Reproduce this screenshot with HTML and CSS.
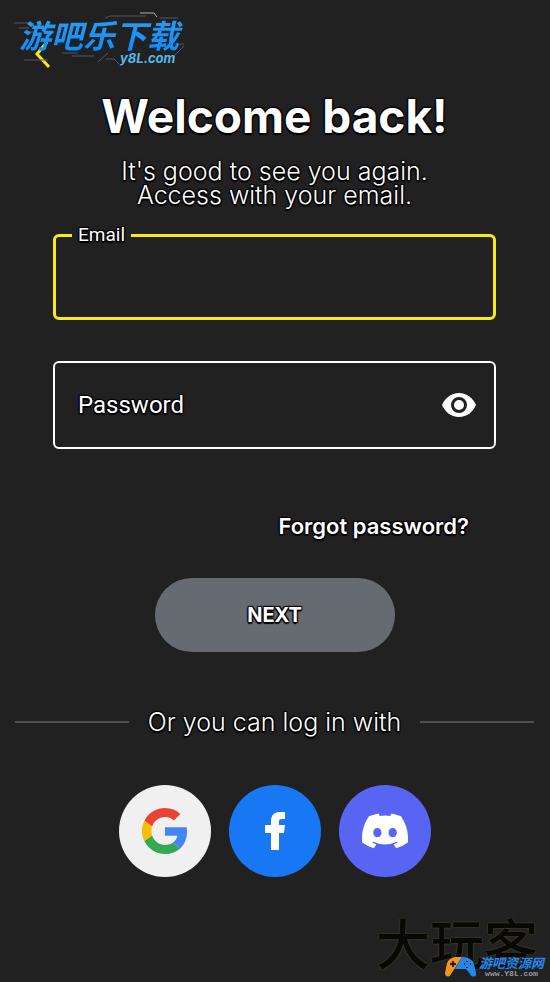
FILE: index.html
```html
<!DOCTYPE html>
<html lang="en">
<head>
    <meta charset="UTF-8">
    <meta name="viewport" content="width=device-width, initial-scale=1.0">
    <title>Welcome back!</title>
    <link rel="stylesheet" href="styles.css">
</head>
<body>
    <header class="header">
        <button class="back" type="button" aria-label="Back">
            <svg width="16" height="28" viewBox="0 0 16 28"><path d="M13 2 3 14 15 27" fill="none" stroke="#f5ea14" stroke-width="3"/></svg>
        </button>
        <div class="site-logo" lang="zh-CN">
            <svg class="site-lines" viewBox="0 0 180 60" fill="none" stroke="#55556a">
                <path d="M0 11h17M5 16h10M10 20h10M91 6l5-2h36M146 6h18" />
                <path d="M126 1h14l3 4" stroke="#b0b0b8"/>
                <path d="M10 48h24M48 41h16M58 44h22M84 50l10-9M92 47h8l5 5M158 46l12-12M160 32h10" />
            </svg>
            <span class="site-name">游吧乐下载</span>
            <span class="site-domain">y8L.com</span>
        </div>
    </header>

    <main class="container">
        <h1>Welcome back!</h1>
        <p class="intro">It's good to see you again.<br>Access with your email.</p>

        <form class="login">
            <fieldset class="email">
                <legend><label for="email">Email</label></legend>
                <input id="email" type="email">
            </fieldset>

            <div class="password">
                <label for="password">Password</label>
                <input id="password" type="password">
                <button class="eye" type="button" aria-label="Show password">
                    <svg width="34" height="24" viewBox="0 0 34 24"><path fill="#fff" fill-rule="evenodd" d="M17 0C9 0 3 5 0 12c3 7 9 12 17 12s14-5 17-12C31 5 25 0 17 0Zm0 20a8 8 0 1 1 0-16 8 8 0 0 1 0 16Zm0-3a5 5 0 1 0 0-10 5 5 0 0 0 0 10Z"/></svg>
                </button>
            </div>

            <a class="forgot" href="#">Forgot password?</a>
            <button class="next" type="submit">NEXT</button>
        </form>

        <div class="divider"><span>Or you can log in with</span></div>

        <div class="social">
            <button class="google" type="button" aria-label="Google">
                <svg width="46" height="46" viewBox="0 0 48 48">
                    <path fill="#ea4335" d="M24 9.500c3.540 0 6.710 1.220 9.210 3.600l6.850-6.850C35.900 2.380 30.470 0 24 0 14.620 0 6.510 5.380 2.560 13.220l7.980 6.190C12.430 13.720 17.740 9.500 24 9.500z"/>
                    <path fill="#4285f4" d="M46.980 24.550c0-1.570-.15-3.090-.38-4.550H24v9.020h12.940c-.58 2.960-2.260 5.480-4.780 7.180l7.730 6c4.510-4.180 7.090-10.360 7.090-17.650z"/>
                    <path fill="#fbbc05" d="M10.530 28.590A14.500 14.500 0 0 1 10.530 19.410l-7.980-6.190a24 24 0 0 0 0 21.560z"/>
                    <path fill="#34a853" d="M24 48c6.480 0 11.930-2.130 15.890-5.810l-7.730-6c-2.150 1.450-4.920 2.300-8.160 2.300-6.260 0-11.570-4.220-13.470-9.910l-7.980 6.190C6.510 42.620 14.620 48 24 48z"/>
                </svg>
            </button>
            <button class="facebook" type="button" aria-label="Facebook">
                <svg width="20" height="38" viewBox="0 0 20 38"><path fill="#fff" d="M6 38V21H0v-8h6V9.500C6 3.500 9 0 14.500 0H20v7h-3.500C14.500 7 14 8 14 9.800V13h6l-1 8h-5v17Z"/></svg>
            </button>
            <button class="discord" type="button" aria-label="Discord">
                <svg width="46" height="36" viewBox="0 0 127 97"><path fill="#fff" d="M107.700 8.070A105.150 105.150 0 0 0 81.470 0a72.060 72.060 0 0 0-3.360 6.830 97.680 97.680 0 0 0-29.110 0A72.370 72.370 0 0 0 45.640 0a105.890 105.890 0 0 0-26.250 8.090C2.790 32.650-1.710 56.600.54 80.210a105.730 105.730 0 0 0 32.170 16.150 77.700 77.700 0 0 0 6.890-11.110 68.420 68.420 0 0 1-10.850-5.180c.91-.66 1.800-1.340 2.660-2a75.570 75.570 0 0 0 64.320 0c.87.71 1.760 1.390 2.660 2a68.680 68.680 0 0 1-10.870 5.190 77 77 0 0 0 6.890 11.100 105.250 105.250 0 0 0 32.190-16.140c2.640-27.380-4.510-51.110-18.900-72.150ZM42.450 65.690C36.180 65.690 31 60 31 53s5-12.740 11.430-12.740S54 46 53.890 53s-5.050 12.690-11.440 12.690Zm42.240 0C78.410 65.690 73.250 60 73.250 53s5-12.740 11.440-12.740S96.230 46 96.120 53s-5.040 12.690-11.430 12.690Z"/></svg>
            </button>
        </div>
    </main>

    <div class="stamp" lang="zh-CN">大玩客</div>
    <div class="source" lang="zh-CN">
        <svg width="32" height="20" viewBox="0 0 32 20">
            <path fill="#f7941d" d="M17 0C10-1 4 1 2 6L0 16c0 4 4 5 6 1l4-6Z"/>
            <path fill="#2387ee" d="M17 0c6 0 10 2 12 7l2 9c1 4-4 5-6 1l-4-5H10Z"/>
            <path d="M5 7h6M8 4v6" stroke="#212121" stroke-width="2"/>
            <path d="M22 4v1M19 7h1M25 7h1M22 10v1" stroke="#212121" stroke-width="2"/>
        </svg>
        <div class="source-text">
            <span class="source-name">游吧资源网</span>
            <span class="source-url">www.Y8L.com</span>
        </div>
    </div>
</body>
</html>
```
FILE: styles.css
```css
* {
    box-sizing: border-box;
}
body {
    position: relative;
    min-height: 100vh;
    margin: 0;
    background-color: #212121;
    color: #fff;
    font-family: Inter, "Noto Sans CJK SC", sans-serif;
    text-shadow: -1px -1px 1px #000, 1px -1px 1px #000, -1px 1px 1px #000, 1px 1px 1px #000, 0 2px 1px #000;
}
button {
    padding: 0;
    border: none;
    background: none;
    color: inherit;
    font-family: inherit;
    text-shadow: inherit;
    cursor: pointer;
}
svg {
    display: block;
}
.header {
    position: relative;
    height: 87px;
    padding: 40px 34px 0;
}
.site-logo {
    position: absolute;
    top: 12px;
    left: 14px;
    width: 180px;
    height: 60px;
    text-shadow: none;
    white-space: nowrap;
}
.site-lines {
    position: absolute;
    top: 0;
    left: 0;
    width: 180px;
}
.site-name {
    position: absolute;
    top: 4px;
    left: 5px;
    padding-right: 8px;
    background: linear-gradient(#2b9df0, #0d8cff);
    -webkit-background-clip: text;
    background-clip: text;
    color: transparent;
    font: italic 700 32px/36px "Noto Sans CJK SC", sans-serif;
}
.site-domain {
    position: absolute;
    top: 38px;
    left: 106px;
    color: #55b8e8;
    font: italic 700 13px/16px Inter, sans-serif;
}
.container {
    padding: 0 16px 0 15px;
}
h1 {
    margin: 0;
    font-size: 46px;
    font-weight: 700;
    line-height: 58px;
    text-align: center;
}
.intro {
    margin: 14px 0 18px;
    font-size: 25px;
    font-weight: 300;
    line-height: 24px;
    text-align: center;
}
.login {
    display: flex;
    flex-direction: column;
    margin: 0 38px;
    font-family: Roboto, sans-serif;
}
.email {
    height: 95px;
    min-width: 0;
    margin: 0;
    padding: 0 16px;
    border: 3px solid #f8ea18;
    border-radius: 6px;
}
.email legend {
    padding: 0 6px;
    font-size: 19px;
    line-height: 20px;
}
.login input {
    flex: 1;
    width: 100%;
    min-width: 0;
    height: 64px;
    padding: 0 8px;
    border: none;
    outline: none;
    background: none;
    color: #fff;
    font: 24px Roboto, sans-serif;
}
.password {
    display: flex;
    align-items: center;
    height: 88px;
    margin-top: 41px;
    padding: 0 18px 0 23px;
    border: 2px solid #fff;
    border-radius: 6px;
    font-size: 24px;
}
.forgot {
    align-self: flex-end;
    margin: 62px 27px 0 0;
    color: #fff;
    font: 600 22px/30px Inter, sans-serif;
    text-decoration: none;
}
.next {
    align-self: center;
    width: 240px;
    height: 74px;
    margin-top: 37px;
    border-radius: 37px;
    background-color: #666a71;
    font: 700 20px Inter, sans-serif;
}
.divider {
    display: flex;
    align-items: center;
    gap: 19px;
    margin-top: 54px;
    font-size: 25px;
    font-weight: 300;
    line-height: 32px;
    white-space: nowrap;
}
.divider::before,
.divider::after {
    content: "";
    flex: 1;
    height: 2px;
    background-color: #505050;
}
.social {
    display: flex;
    justify-content: center;
    gap: 18px;
    margin-top: 47px;
}
.social button {
    display: flex;
    align-items: center;
    justify-content: center;
    width: 92px;
    height: 92px;
    border-radius: 50%;
}
.google {
    background-color: #f0f0f0;
}
.facebook {
    background-color: #1877f2;
}
.discord {
    background-color: #5865f2;
}
.stamp {
    position: absolute;
    right: 12px;
    bottom: 8px;
    color: #080804;
    font: 500 54px/64px "Noto Sans CJK SC", sans-serif;
    text-shadow: 0 0 2px #5a5230;
}
.source {
    position: absolute;
    right: 6px;
    bottom: 4px;
    display: flex;
    align-items: center;
    gap: 2px;
    text-shadow: none;
}
.source-text {
    display: flex;
    flex-direction: column;
}
.source-name {
    color: #2387ee;
    font: italic 700 13px/14px "Noto Sans CJK SC", sans-serif;
}
.source-url {
    color: #999;
    font: 700 8px/8px "Liberation Mono", monospace;
    text-align: center;
}
```
